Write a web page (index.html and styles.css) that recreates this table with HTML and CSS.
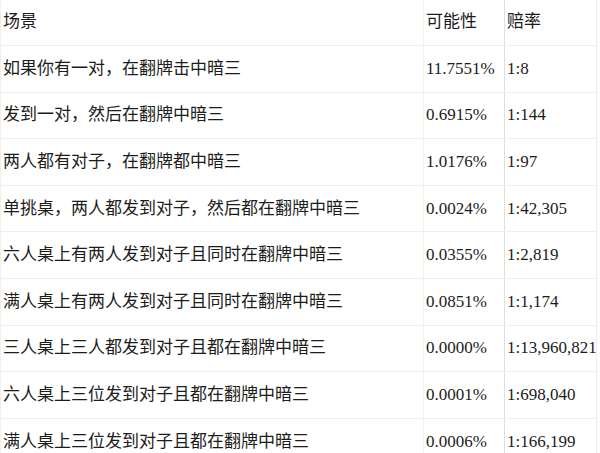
FILE: index.html
```html
<!DOCTYPE html>
<html lang="zh">
<head>
<meta charset="utf-8">
<link rel="stylesheet" href="styles.css">
</head>
<body>
<table class="odds">
  <tr><td class="c1">场景</td><td class="c2">可能性</td><td class="c3">赔率</td></tr>
  <tr><td class="c1">如果你有一对，在翻牌击中暗三</td><td class="c2">11.7551%</td><td class="c3">1:8</td></tr>
  <tr><td class="c1">发到一对，然后在翻牌中暗三</td><td class="c2">0.6915%</td><td class="c3">1:144</td></tr>
  <tr><td class="c1">两人都有对子，在翻牌都中暗三</td><td class="c2">1.0176%</td><td class="c3">1:97</td></tr>
  <tr><td class="c1">单挑桌，两人都发到对子，然后都在翻牌中暗三</td><td class="c2">0.0024%</td><td class="c3">1:42,305</td></tr>
  <tr><td class="c1">六人桌上有两人发到对子且同时在翻牌中暗三</td><td class="c2">0.0355%</td><td class="c3">1:2,819</td></tr>
  <tr><td class="c1">满人桌上有两人发到对子且同时在翻牌中暗三</td><td class="c2">0.0851%</td><td class="c3">1:1,174</td></tr>
  <tr><td class="c1">三人桌上三人都发到对子且都在翻牌中暗三</td><td class="c2">0.0000%</td><td class="c3">1:13,960,821</td></tr>
  <tr><td class="c1">六人桌上三位发到对子且都在翻牌中暗三</td><td class="c2">0.0001%</td><td class="c3">1:698,040</td></tr>
  <tr><td class="c1">满人桌上三位发到对子且都在翻牌中暗三</td><td class="c2">0.0006%</td><td class="c3">1:166,199</td></tr>
</table>
</body>
</html>
```
FILE: styles.css
```css
html, body {
  margin: 0;
  padding: 0;
  background: #ffffff;
  overflow: hidden;
}
.odds {
  border-collapse: collapse;
  width: 597px;
  margin-top: -1px;
  font-family: "Liberation Serif", "Noto Sans CJK SC", serif;
  font-size: 17px;
  color: #1c1c1a;
  table-layout: fixed;
  border-left: 1px solid #f1efe6;
  border-right: 1px solid #f1efe6;
}
.odds td {
  height: 46.6px;
  padding: 0 0 0 2px;
  box-sizing: border-box;
  border-bottom: 1px solid #f0efea;
  vertical-align: middle;
  white-space: nowrap;
  overflow: hidden;
  line-height: 20px;
}
.c1 { width: 423px; }
.c2 { width: 81px; border-left: 1px solid #f3f0e6; }
.c3 { width: 92px; border-left: 1px solid #dfdfda; padding-left: 1px; }
```
